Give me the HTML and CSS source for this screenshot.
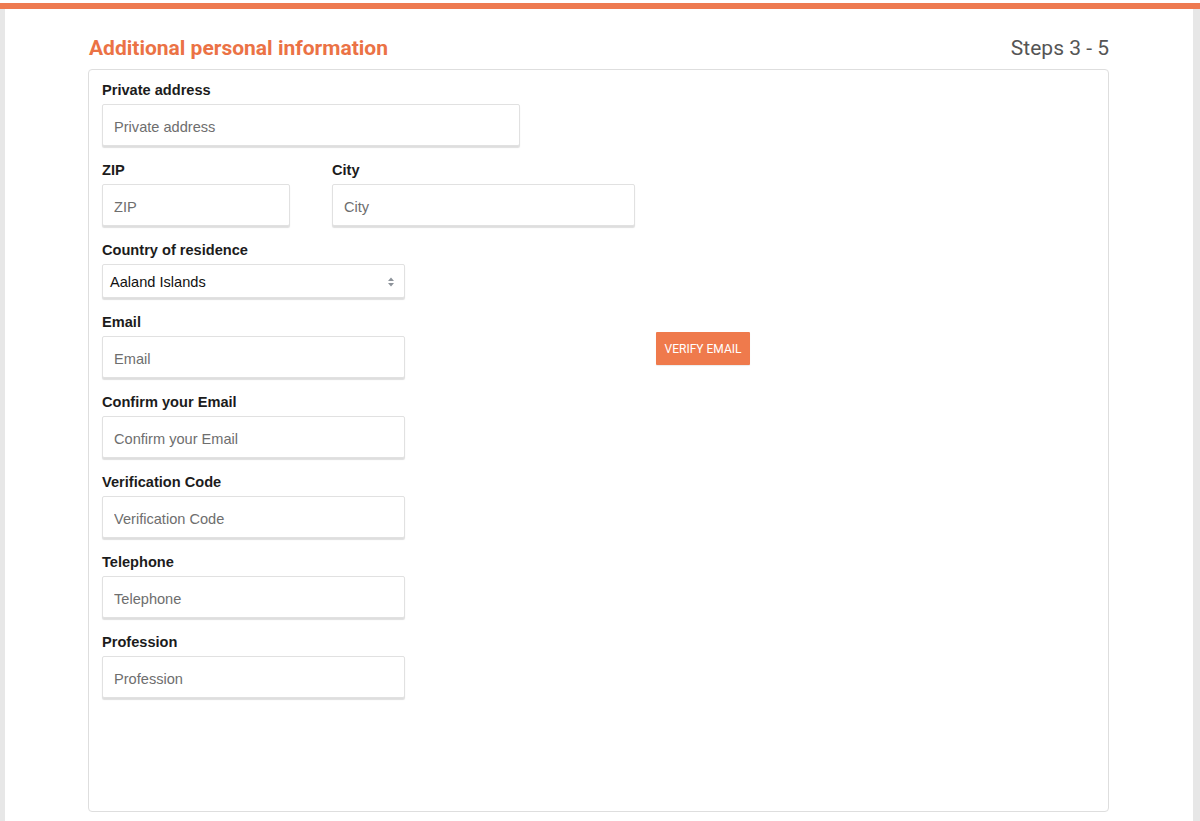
FILE: index.html
```html
<!DOCTYPE html>
<html lang="en">
<head>
<meta charset="utf-8">
<title>Additional personal information</title>
<link rel="stylesheet" href="styles.css">
</head>
<body>
<div class="topbar"></div>
<div class="frame">
  <div class="rail"></div>
  <main class="page">
    <header class="head">
      <h1 class="title">Additional personal information</h1>
      <span class="steps">Steps 3 - 5</span>
    </header>
    <section class="card">
      <div class="group">
        <label class="label">Private address</label>
        <input class="input w-wide" type="text" placeholder="Private address">
      </div>
      <div class="row">
        <div class="group">
          <label class="label">ZIP</label>
          <input class="input w-zip" type="text" placeholder="ZIP">
        </div>
        <div class="group">
          <label class="label">City</label>
          <input class="input w-std" type="text" placeholder="City">
        </div>
      </div>
      <div class="group">
        <label class="label">Country of residence</label>
        <div class="select w-std">
          <span class="select-value">Aaland Islands</span>
          <svg class="select-arrows" width="8" height="12" viewBox="0 0 8 12"><path d="M4 1.5 L7 5 H1 Z" fill="#8d939a"/><path d="M4 10.5 L7 7 H1 Z" fill="#8d939a"/></svg>
        </div>
      </div>
      <div class="row">
        <div class="group">
          <label class="label">Email</label>
          <input class="input w-std" type="text" placeholder="Email">
        </div>
        <button class="btn-verify" type="button">VERIFY EMAIL</button>
      </div>
      <div class="group">
        <label class="label">Confirm your Email</label>
        <input class="input w-std" type="text" placeholder="Confirm your Email">
      </div>
      <div class="group">
        <label class="label">Verification Code</label>
        <input class="input w-std" type="text" placeholder="Verification Code">
      </div>
      <div class="group">
        <label class="label">Telephone</label>
        <input class="input w-std" type="text" placeholder="Telephone">
      </div>
      <div class="group">
        <label class="label">Profession</label>
        <input class="input w-std" type="text" placeholder="Profession">
      </div>
    </section>
  </main>
  <div class="rail rail-right"></div>
</div>
</body>
</html>
```

FILE: styles.css
```css
* { box-sizing: border-box; }

html, body {
  margin: 0;
  background: #ffffff;
}

body {
  padding-top: 3px;
  font-family: "Liberation Sans", Arial, sans-serif;
  overflow: hidden;
}

.topbar {
  height: 6px;
  background: #ee7a50;
}

.frame {
  display: flex;
  min-height: 812px;
}

.rail {
  width: 5px;
  flex: none;
  background: #e7e7e7;
}

.rail-right {
  width: 7px;
}

.page {
  flex: 1;
  padding: 27px 84px 0 83px;
}

.head {
  display: flex;
  justify-content: space-between;
  align-items: flex-start;
  margin-bottom: 9px;
  height: 24px;
}

.title {
  margin: 0 0 0 1px;
  font-family: Roboto, "Liberation Sans", sans-serif;
  font-weight: 700;
  font-size: 21px;
  line-height: 24px;
  color: #eb7245;
}

.steps {
  font-family: Roboto, "Liberation Sans", sans-serif;
  font-size: 21px;
  line-height: 24px;
  color: #555555;
}

.card {
  height: 743px;
  border: 1px solid #dedede;
  border-radius: 4px;
  padding: 10px 12px 0 13px;
}

.row {
  display: flex;
  gap: 42px;
  align-items: flex-start;
}

.group {
  display: flex;
  flex-direction: column;
  margin-bottom: 14px;
}

.label {
  font-weight: 700;
  font-size: 14.6px;
  line-height: 20px;
  color: #1c1c1c;
  margin-bottom: 4px;
}

.input {
  height: 42px;
  border: 1px solid #e1e1e1;
  border-radius: 2px;
  padding: 4px 11px 0 11px;
  font-family: "Liberation Sans", Arial, sans-serif;
  font-size: 14.6px;
  color: #333;
  background: #fff;
  box-shadow: 0 2px 1px rgba(0, 0, 0, 0.13);
  outline: none;
}

.input::placeholder {
  color: #6e6e6e;
}

.w-wide { width: 418px; }
.w-zip { width: 188px; }
.w-std { width: 303px; }

.select {
  height: 34px;
  border: 1px solid #e1e1e1;
  border-radius: 2px;
  padding: 2px 9px 0 7px;
  display: flex;
  align-items: center;
  justify-content: space-between;
  box-shadow: 0 2px 1px rgba(0, 0, 0, 0.13);
  background: #fff;
}

.select-value {
  font-size: 14.6px;
  color: #111;
}

.select-arrows {
  display: block;
}

.btn-verify {
  margin-top: 20px;
  margin-left: 209px;
  width: 94px;
  height: 33px;
  border: none;
  border-radius: 1px;
  background: #ef7a4c;
  color: #ffffff;
  font-family: Roboto, "Liberation Sans", sans-serif;
  font-size: 12px;
  padding: 0;
  box-shadow: 0 1px 1px rgba(0, 0, 0, 0.08);
}
```
